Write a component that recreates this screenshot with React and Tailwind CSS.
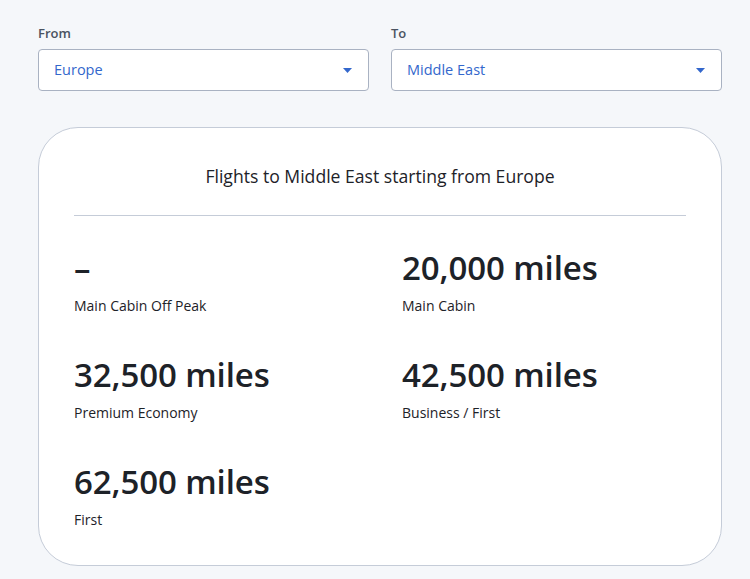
import React from "react";

function Select({ label, value }) {
  return (
    <div className="flex flex-col">
      <div className="text-[13px] leading-[17px] font-semibold text-[#4a5361] mb-[7px]">{label}</div>
      <div className="h-[42px] bg-white border border-[#a9b2c2] rounded-[4px] flex items-center justify-between pl-[15px] pr-[16px]">
        <span className="text-[14.5px] text-[#3367cc]">{value}</span>
        <svg width="9" height="5" viewBox="0 0 9 5">
          <path d="M0 0 L9 0 L4.5 5 Z" fill="#3367cc" />
        </svg>
      </div>
    </div>
  );
}

function Fare({ value, label }) {
  return (
    <div className="flex flex-col">
      <div className="text-[33px] leading-[40px] font-semibold text-[#1d2228] tracking-[-0.1px]">{value}</div>
      <div className="text-[14px] leading-[20px] text-[#1d2228] mt-[8px]">{label}</div>
    </div>
  );
}

export default function App() {
  return (
    <div
      className="w-[750px] h-[579px] bg-[#f5f7fa] overflow-hidden"
      style={{ fontFamily: '"Open Sans", "Noto Sans", sans-serif' }}
    >
      <div className="pl-[38px] pt-[25px] w-[722px]">
        <div className="grid grid-cols-2 gap-[22px]">
          <Select label="From" value="Europe" />
          <Select label="To" value="Middle East" />
        </div>
        <div className="mt-[36px] bg-white border border-[#c5ccd8] rounded-[40px] h-[439px] pt-[34px] px-[35px]">
          <div className="text-center text-[17.6px] leading-[28px] text-[#1d2228]">
            Flights to Middle East starting from Europe
          </div>
          <div className="mt-[25px] h-px bg-[#c5ccd8]" />
          <div className="mt-[32px] grid grid-cols-[328px_1fr] gap-y-[39px]">
            <Fare value="–" label="Main Cabin Off Peak" />
            <Fare value="20,000 miles" label="Main Cabin" />
            <Fare value="32,500 miles" label="Premium Economy" />
            <Fare value="42,500 miles" label="Business / First" />
            <Fare value="62,500 miles" label="First" />
          </div>
        </div>
      </div>
    </div>
  );
}
